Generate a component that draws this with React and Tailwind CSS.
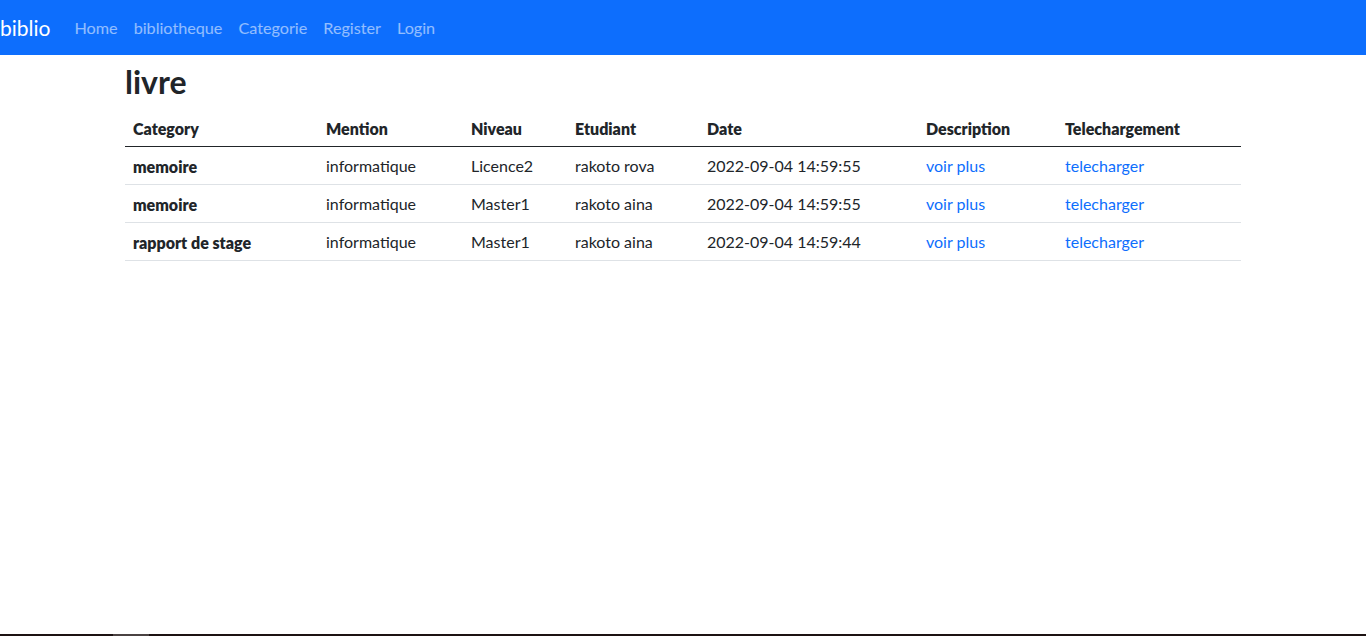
const links = ["Home", "bibliotheque", "Categorie", "Register", "Login"];

const columns = [
  { label: "Category", w: "w-[193px]" },
  { label: "Mention", w: "w-[145px]" },
  { label: "Niveau", w: "w-[104px]" },
  { label: "Etudiant", w: "w-[132px]" },
  { label: "Date", w: "w-[219px]" },
  { label: "Description", w: "w-[139px]" },
  { label: "Telechargement", w: "w-[184px]" },
];

const livres = [
  { category: "memoire", mention: "informatique", niveau: "Licence2", etudiant: "rakoto rova", date: "2022-09-04 14:59:55" },
  { category: "memoire", mention: "informatique", niveau: "Master1", etudiant: "rakoto aina", date: "2022-09-04 14:59:55" },
  { category: "rapport de stage", mention: "informatique", niveau: "Master1", etudiant: "rakoto aina", date: "2022-09-04 14:59:44" },
];

const App = () => {
  return (
    <div className="h-[636px] flex flex-col bg-white text-[#212529] font-['Lato','Noto_Sans',sans-serif]">
      {/* Navbar */}
      <nav className="h-[55px] shrink-0 bg-[#0d6efd] flex items-center">
        <a className="text-[21px] text-white mr-4 leading-[30px]">biblio</a>
        <ul className="flex items-center">
          {links.map((l) => (
            <li key={l}>
              <a className="block px-2 text-[16.2px] text-white/55 leading-6">{l}</a>
            </li>
          ))}
        </ul>
      </nav>

      {/* Content */}
      <main className="flex-1">
        <div className="w-[1140px] mx-auto px-3">
          <h1 className="mt-2 mb-2 text-[32px] font-bold leading-[38px]">livre</h1>
          <table className="w-full table-fixed border-collapse text-[16px]">
            <thead>
              <tr className="border-b border-[#212529]">
                {columns.map((c) => (
                  <th key={c.label} className={`${c.w} text-left font-extrabold px-2 pt-[9px] pb-[7px] leading-[21px]`}>
                    {c.label}
                  </th>
                ))}
              </tr>
            </thead>
            <tbody>
              {livres.map((l, i) => (
                <tr key={i} className="border-b border-[#dee2e6]">
                  <th className="text-left font-extrabold px-2 pt-[9px] pb-[7px] leading-[21px]">{l.category}</th>
                  <td className="px-2 py-2 leading-[21px]">{l.mention}</td>
                  <td className="px-2 py-2 leading-[21px]">{l.niveau}</td>
                  <td className="px-2 py-2 leading-[21px]">{l.etudiant}</td>
                  <td className="px-2 py-2 leading-[21px]">{l.date}</td>
                  <td className="px-2 py-2 leading-[21px]">
                    <a className="text-[#0d6efd]">voir plus</a>
                  </td>
                  <td className="px-2 py-2 leading-[21px]">
                    <a className="text-[#0d6efd]">telecharger</a>
                  </td>
                </tr>
              ))}
            </tbody>
          </table>
        </div>
      </main>

      {/* bottom edge */}
      <div className="h-[2px] shrink-0 flex bg-[#1c1212]">
        <div className="w-[113px]" />
        <div className="w-[36px] bg-[#4a4242]" />
      </div>
    </div>
  );
};

export default App;
